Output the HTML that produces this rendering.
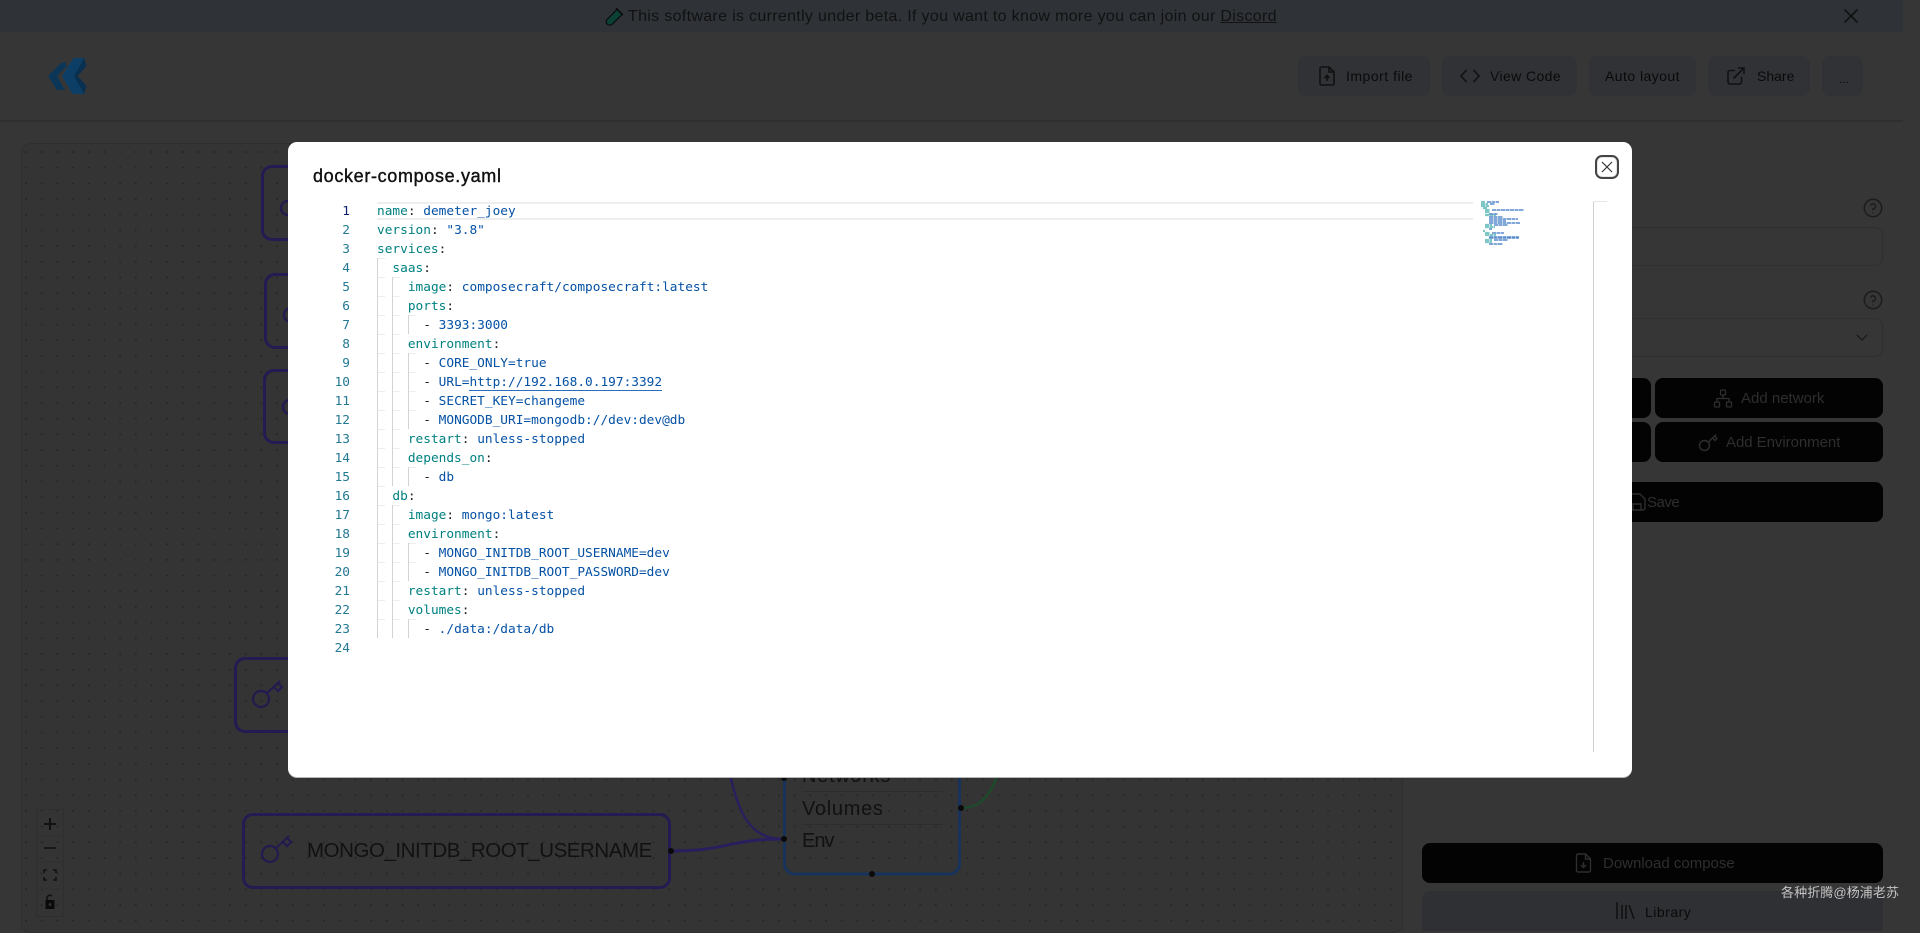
<!DOCTYPE html>
<html lang="en"><head><meta charset="utf-8"><title>docker-compose.yaml</title>
<style>
*{box-sizing:border-box}
html,body{margin:0;padding:0;width:1920px;height:919px;overflow:hidden;background:#363636;font-family:"Liberation Sans","Noto Sans CJK SC",sans-serif;color:#111}
.a{position:absolute}
#banner{left:0;top:0;width:1903px;height:32px;background:#2f3338}
#hline{left:0;top:120px;width:1903px;height:2px;background:#2f2f2f}
.hb{position:absolute;top:56px;height:40px;background:#303236;border-radius:8px;font-size:14px;line-height:40px;color:#0a0a0a}
.hb span{position:absolute;top:0;white-space:nowrap}
#canvas{left:21px;top:143px;width:1382px;height:790px;border:1px solid #2f2f2f;border-radius:10px;background-color:#343434;background-image:radial-gradient(circle at 1px 1px,#262626 .8px,transparent 1.1px);background-size:15.7px 15.7px;background-position:3px 7px}
.node{position:absolute;border:3px solid #251a52;border-radius:11px}
.svc{font-size:20px;font-weight:normal;color:#111;position:absolute;left:802px;white-space:nowrap}
.dk{position:absolute;background:#030303;border-radius:8px;color:#2e2e2e;font-size:15px;text-align:center}
.dk span{position:absolute;top:1px;white-space:nowrap}
.box{position:absolute;left:1422px;width:461px;height:39px;border:1px solid #2f2f2f;border-radius:8px}
#modal{left:288px;top:142px;width:1344px;height:635px;background:#fff;border-radius:9px;box-shadow:0 1px 0 #b5b5b5}
#title{left:313px;top:165px;font-size:18px;line-height:22px;color:#111;-webkit-text-stroke:.4px #111;white-space:nowrap;letter-spacing:.66px}
#close{left:1595px;top:155px;width:24px;height:24px;border:2px solid #444;border-radius:7px;background:#fff;box-shadow:inset 0 0 0 1px #e6e6e6}
#hl{left:377px;top:202px;width:1096px;height:18px;border-top:2px solid #eee;border-bottom:2px solid #eee}
.ln,.cl{position:absolute;height:19px;line-height:19px;margin-top:1px;font-family:"DejaVu Sans Mono","Liberation Mono",monospace;font-size:12.8px;white-space:pre}
.ln{left:300px;width:50px;text-align:right;color:#237893}
.cl{left:377px;color:#0451a5}
.cl b{font-weight:normal;color:#008080}
.cl i{font-style:normal;color:#222}
.g{position:absolute;width:8px;border-left:1px solid #d3d3d3;background:linear-gradient(#eee 1px,transparent 1px) 0 0/100% 19px}
#wm{left:1781px;top:884px;font-size:13px;line-height:18px;color:#c4c4c4;white-space:nowrap;letter-spacing:.1px}
</style></head><body>
<div class="a" id="banner"></div>
<svg class="a" style="left:604px;top:5px" width="22" height="22" viewBox="0 0 22 22"><path d="M3 19 C1.5 17.5 2 15.5 3.5 14 L13 4.5 L18 9.5 L8.5 19 C7 20.5 4.5 20.5 3 19Z" fill="#0b4034" stroke="#0a0a0a" stroke-width="1.2"/><path d="M12 3 L19 10" stroke="#0a0a0a" stroke-width="1.4"/></svg>
<div class="a" style="left:628px;top:6px;font-size:16px;line-height:22px;color:#111;white-space:nowrap;letter-spacing:.32px">This software is currently under beta. If you want to know more you can join our <u>Discord</u></div>
<svg class="a" style="left:1843px;top:8px" width="16" height="16" viewBox="0 0 16 16"><path d="M1.5 1.5L14.5 14.5M14.5 1.5L1.5 14.5" stroke="#111" stroke-width="1.6" fill="none"/></svg>
<svg class="a" style="left:44px;top:52px" width="48" height="48" viewBox="44 52 48 48"><path d="M61 63L65 62L67 66L57 76L65 90L57 90L48 76Z" fill="#0b3658"/><path d="M73.5 58H84L86.5 66L77.5 76L86.5 86L84 94H72.6L62 76Z" fill="#0d3f66"/><path d="M84 58L86.5 66L77.5 76L86.5 86L84 94L74 76Z" fill="#0a3050"/></svg>
<div class="hb" style="left:1298px;width:132px"><svg class="a" style="left:20px;top:10px" width="18" height="20" viewBox="0 0 18 20" fill="none" stroke="#111" stroke-width="1.6"><path d="M2 2.5A1.5 1.5 0 0 1 3.5 1H11L16 6V17.5A1.5 1.5 0 0 1 14.5 19H3.5A1.5 1.5 0 0 1 2 17.5Z"/><path d="M11 1V6H16M9 15V9.5M6.5 12L9 9.5L11.5 12"/></svg><span style="left:48px;letter-spacing:.5px">Import file</span></div>
<div class="hb" style="left:1442px;width:135px"><svg class="a" style="left:18px;top:13px" width="20" height="14" viewBox="0 0 20 14" fill="none" stroke="#111" stroke-width="1.6"><path d="M6.5 1L1 7L6.5 13M13.5 1L19 7L13.5 13"/></svg><span style="left:48px;letter-spacing:.4px">View Code</span></div>
<div class="hb" style="left:1589px;width:107px"><span style="left:16px;letter-spacing:.45px">Auto layout</span></div>
<div class="hb" style="left:1708px;width:102px"><svg class="a" style="left:19px;top:11px" width="18" height="18" viewBox="0 0 18 18" fill="none" stroke="#111" stroke-width="1.6"><path d="M8 3.5H3A2 2 0 0 0 1 5.5V15A2 2 0 0 0 3 17H12.5A2 2 0 0 0 14.5 15V10M6.5 11.5L17 1M11 1H17V7"/></svg><span style="left:49px">Share</span></div>
<div class="hb" style="left:1822px;width:41px"><span style="left:17px;top:3px;font-size:12px">...</span></div>
<div class="a" id="hline"></div>
<div class="a" id="canvas"></div>
<div class="node" style="left:261px;top:165px;width:200px;height:76px"></div>
<div class="node" style="left:264px;top:273px;width:200px;height:76px"></div>
<div class="node" style="left:263px;top:369px;width:200px;height:75px"></div>
<div class="node" style="left:234px;top:657px;width:200px;height:76px"></div>
<div class="node" style="left:242px;top:813px;width:429px;height:76px"></div>
<svg class="a" style="left:0;top:0" width="1920" height="919" fill="none">
<g stroke="#231a50" stroke-width="2.4"><circle cx="288" cy="208" r="7"/><circle cx="291" cy="315" r="7"/><circle cx="290" cy="407" r="7"/></g>
<g stroke="#231a50" stroke-width="2.2"><circle cx="261" cy="699" r="8"/><path d="M267 693L280 681M274 687L278 691L282 687L278 683"/></g>
<g stroke="#231a50" stroke-width="2.2"><circle cx="270" cy="854" r="8"/><path d="M276 848L289 836M283 842L287 846L291 842L287 838"/></g>
<path d="M671 851C728 851 728 839 784 839" stroke="#2a1f5e" stroke-width="3"/>
<path d="M728 765C738 815 750 839 784 839" stroke="#2a1f5e" stroke-width="2.4"/>
<path d="M961 808C985 808 992 790 1002 765" stroke="#1d4a2a" stroke-width="2.400"/>
<rect x="784.5" y="740" width="175" height="134" rx="10" stroke="#17335c" stroke-width="3"/>
<path d="M802 791.5H943M802 824.5H943" stroke="#2d2d2d"/>
<g fill="#0a0a0a"><circle cx="671" cy="851" r="3"/><circle cx="784" cy="839" r="3"/><circle cx="784" cy="778" r="3"/><circle cx="961" cy="808" r="3"/><circle cx="872" cy="874" r="3"/></g>
<g stroke="#2f2f2f"><rect x="36.5" y="809.5" width="27" height="107"/><path d="M36 836H64M36 862H64M36 889H64"/></g>
<path d="M44 824H56M50 818V830" stroke="#111" stroke-width="2"/>
<path d="M44 848H56" stroke="#111" stroke-width="1.6"/>
<path d="M44 873V870H47M53 870H56V873M56 877V880H53M47 880H44V877" stroke="#111" stroke-width="1.6"/>
<path d="M47 900V898A3 3 0 0 1 52 896" stroke="#111" stroke-width="1.6"/>
<rect x="45.5" y="900" width="9" height="9" fill="#0a0a0a"/><circle cx="50" cy="904.5" r="1.4" fill="#333"/>
</svg>
<div class="svc" style="top:765px;letter-spacing:.7px">Networks</div>
<div class="svc" style="top:798px;letter-spacing:.7px">Volumes</div>
<div class="svc" style="top:830px;letter-spacing:-1px">Env</div>
<div class="a" style="left:307px;top:838px;font-size:20.5px;line-height:26px;color:#111;white-space:nowrap;letter-spacing:-.45px">MONGO_INITDB_ROOT_USERNAME</div>
<svg class="a" style="left:1860px;top:195px" width="26" height="120" fill="none" stroke="#1c1c1c" stroke-width="1.5"><circle cx="13" cy="13" r="8.7"/><circle cx="13" cy="105" r="8.7"/><path d="M10.5 10.5A2.6 2.6 0 1 1 13 14V15.5M13 17.5V18.5M10.5 102.500A2.6 2.6 0 1 1 13 106V107.500M13 109.500V110.500"/></svg>
<div class="box" style="top:227px"></div>
<div class="box" style="top:318px"></div>
<svg class="a" style="left:1855px;top:333px" width="14" height="10" fill="none" stroke="#1c1c1c" stroke-width="1.5"><path d="M2 2L7 7L12 2"/></svg>
<div class="dk" style="left:1422px;top:378px;width:229px;height:40px"></div>
<div class="dk" style="left:1422px;top:422px;width:229px;height:40px"></div>
<div class="dk" style="left:1655px;top:378px;width:228px;height:40px;line-height:40px"><span style="left:86px">Add network</span></div>
<svg class="a" style="left:1713px;top:389px" width="20" height="19" fill="none" stroke="#2e2e2e" stroke-width="1.3"><rect x="7.500" y="1" width="5" height="5" rx="1"/><rect x="1.500" y="13" width="5" height="5" rx="1"/><rect x="13.500" y="13" width="5" height="5" rx="1"/><path d="M10 6V9.500M4 13V9.500H16V13"/></svg>
<div class="dk" style="left:1655px;top:422px;width:228px;height:40px;line-height:40px"><span style="left:71px;letter-spacing:-.05px">Add Environment</span></div>
<svg class="a" style="left:1698px;top:432px" width="21" height="20" fill="none" stroke="#2e2e2e" stroke-width="1.4"><circle cx="6.500" cy="13.500" r="5"/><path d="M10.500 10L18 2.500M14.500 6L17 8.500L19 6.500L16.500 4"/></svg>
<div class="dk" style="left:1422px;top:482px;width:461px;height:40px;line-height:40px"><span style="left:225px;letter-spacing:-.5px">Save</span></div>
<svg class="a" style="left:1628px;top:493px" width="18" height="18" viewBox="0 0 18 18" fill="none" stroke="#2e2e2e" stroke-width="1.4"><path d="M2 1H12L17 6V15A2 2 0 0 1 15 17H3A2 2 0 0 1 1 15V3M5 17V11H13V17"/></svg>
<div class="dk" style="left:1422px;top:843px;width:461px;height:40px;line-height:40px"><span style="left:181px">Download compose</span></div>
<svg class="a" style="left:1575px;top:853px" width="17" height="20" fill="none" stroke="#2e2e2e" stroke-width="1.4"><path d="M1.500 2.500A1.500 1.500 0 0 1 3 1H10.500L15.500 6V17.500A1.500 1.500 0 0 1 14 19H3A1.500 1.500 0 0 1 1.500 17.500ZM10.500 1V6H15.500M8.500 9V14.500M6 12L8.500 14.500L11 12"/></svg>
<div class="a" style="left:1422px;top:891px;width:461px;height:40px;background:#2f3033;border-radius:8px 8px 0 0"></div>
<svg class="a" style="left:1615px;top:901px" width="20" height="18" fill="none" stroke="#111" stroke-width="1.6"><path d="M2 1V18M7 4V18M11 4V18M14 4L19 18"/></svg>
<div class="a" style="left:1645px;top:903px;font-size:14px;line-height:18px;color:#0a0a0a;letter-spacing:.5px">Library</div>

<div class="a" id="modal"></div>
<div class="a" id="title">docker-compose.yaml</div>
<div class="a" id="close"><svg style="position:absolute;left:3px;top:3px" width="14" height="14" viewBox="0 0 14 14"><path d="M2 2L12 12M12 2L2 12" stroke="#333" stroke-width="1.200" fill="none"/></svg></div>
<div class="a" id="hl"></div>
<div class="a" style="left:1593px;top:201px;width:1px;height:551px;background:#d0d0d0"></div>
<div class="a" style="left:1593px;top:201px;width:14px;height:1px;background:#e6e6e6"></div>
<svg class="a" style="left:1481px;top:200px;opacity:.78" width="48" height="50" viewBox="1481 200 48 50" fill="none" stroke-width="1.600" stroke-dasharray="4 .5">
<path stroke="#5cb8b8" stroke-width="2.200" d="M1481 202h4M1481 204h7M1481 206h8M1483 208h4M1485 210h5M1485 212h5M1485 215h11M1485 225h7M1485 227h10M1483 231h2M1485 233h5M1485 235h11M1485 240h7M1485 242h7"/>
<path stroke="#2a6cc0" d="M1487 202h12M1490 204h5M1492 210h32M1489 214h9M1489 217h14M1489 219h29M1489 221h17M1489 223h31M1494 225h14M1489 229h3M1492 233h12M1489 237h30M1489 238h30M1494 240h14M1489 244h14"/>
</svg>
<div class="g" style="left:377px;top:258px;height:380px"></div>
<div class="g" style="left:392px;top:277px;height:209px"></div>
<div class="g" style="left:392px;top:505px;height:133px"></div>
<div class="g" style="left:408px;top:315px;height:19px"></div>
<div class="g" style="left:408px;top:353px;height:76px"></div>
<div class="g" style="left:408px;top:467px;height:19px"></div>
<div class="g" style="left:408px;top:543px;height:38px"></div>
<div class="g" style="left:408px;top:619px;height:19px"></div>
<div class="a" style="left:469px;top:390px;width:193px;height:1px;background:#2a6cc0"></div>

<div class="ln" style="top:201px;color:#0b216f">1</div><div class="ln" style="top:220px">2</div><div class="ln" style="top:239px">3</div><div class="ln" style="top:258px">4</div><div class="ln" style="top:277px">5</div><div class="ln" style="top:296px">6</div><div class="ln" style="top:315px">7</div><div class="ln" style="top:334px">8</div><div class="ln" style="top:353px">9</div><div class="ln" style="top:372px">10</div><div class="ln" style="top:391px">11</div><div class="ln" style="top:410px">12</div><div class="ln" style="top:429px">13</div><div class="ln" style="top:448px">14</div><div class="ln" style="top:467px">15</div><div class="ln" style="top:486px">16</div><div class="ln" style="top:505px">17</div><div class="ln" style="top:524px">18</div><div class="ln" style="top:543px">19</div><div class="ln" style="top:562px">20</div><div class="ln" style="top:581px">21</div><div class="ln" style="top:600px">22</div><div class="ln" style="top:619px">23</div><div class="ln" style="top:638px">24</div>

<div class="cl" style="top:201px"><b>name</b><i>:</i> demeter_joey</div>
<div class="cl" style="top:220px"><b>version</b><i>:</i> "3.8"</div>
<div class="cl" style="top:239px"><b>services</b><i>:</i></div>
<div class="cl" style="top:258px">  <b>saas</b><i>:</i></div>
<div class="cl" style="top:277px">    <b>image</b><i>:</i> composecraft/composecraft:latest</div>
<div class="cl" style="top:296px">    <b>ports</b><i>:</i></div>
<div class="cl" style="top:315px">      <i>-</i> 3393:3000</div>
<div class="cl" style="top:334px">    <b>environment</b><i>:</i></div>
<div class="cl" style="top:353px">      <i>-</i> CORE_ONLY=true</div>
<div class="cl" style="top:372px">      <i>-</i> URL=http://192.168.0.197:3392</div>
<div class="cl" style="top:391px">      <i>-</i> SECRET_KEY=changeme</div>
<div class="cl" style="top:410px">      <i>-</i> MONGODB_URI=mongodb://dev:dev@db</div>
<div class="cl" style="top:429px">    <b>restart</b><i>:</i> unless-stopped</div>
<div class="cl" style="top:448px">    <b>depends_on</b><i>:</i></div>
<div class="cl" style="top:467px">      <i>-</i> db</div>
<div class="cl" style="top:486px">  <b>db</b><i>:</i></div>
<div class="cl" style="top:505px">    <b>image</b><i>:</i> mongo:latest</div>
<div class="cl" style="top:524px">    <b>environment</b><i>:</i></div>
<div class="cl" style="top:543px">      <i>-</i> MONGO_INITDB_ROOT_USERNAME=dev</div>
<div class="cl" style="top:562px">      <i>-</i> MONGO_INITDB_ROOT_PASSWORD=dev</div>
<div class="cl" style="top:581px">    <b>restart</b><i>:</i> unless-stopped</div>
<div class="cl" style="top:600px">    <b>volumes</b><i>:</i></div>
<div class="cl" style="top:619px">      <i>-</i> ./data:/data/db</div>
<div class="a" id="wm">各种折腾@杨浦老苏</div>
</body></html>
